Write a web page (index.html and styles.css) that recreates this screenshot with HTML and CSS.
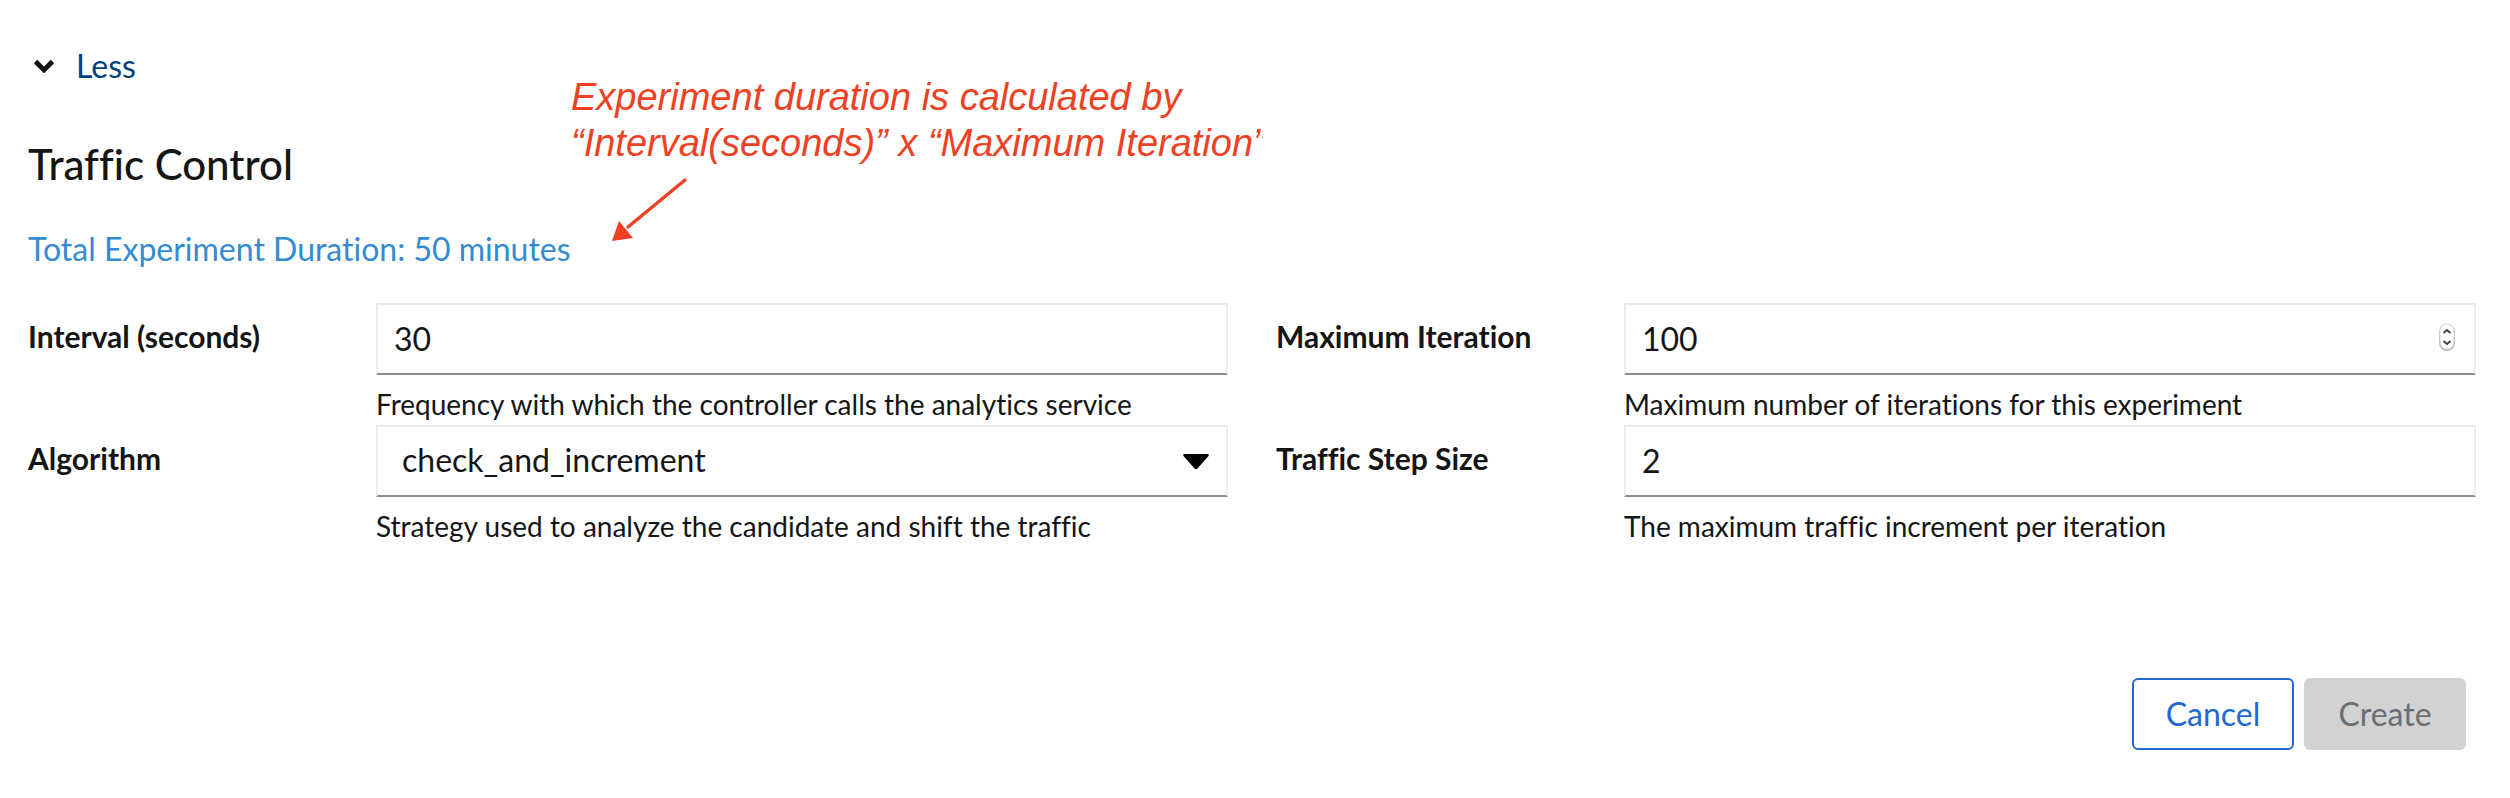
FILE: index.html
```html
<!DOCTYPE html>
<html lang="en">
<head>
<meta charset="utf-8">
<title>Traffic Control</title>
<meta name="viewport" content="width=device-width, initial-scale=1">
<link rel="stylesheet" href="styles.css">
</head>
<body>
<main class="page">
  <button class="toggle" type="button" aria-expanded="true">
    <svg class="toggle-icon" width="22" height="14" viewBox="0 0 22 14" aria-hidden="true"><path d="M2.500 2.500l8.500 8.500 8.500-8.500" fill="none" stroke="#151515" stroke-width="4.800"/></svg>
    <span>Less</span>
  </button>

  <section class="section">
    <h1 class="title">Traffic Control</h1>
    <p class="duration">Total Experiment Duration: 50 minutes</p>
    <aside class="note">
      <p class="note-text">Experiment duration is calculated by<br>“Interval(seconds)” x “Maximum Iteration”</p>
      <svg class="note-arrow" width="80" height="68" viewBox="0 0 80 68" aria-hidden="true"><path d="M75 4L18 51" stroke="#ee4023" stroke-width="3.400" stroke-linecap="round"/><path d="M2 65L9 45 23 62z" fill="#ee4023"/></svg>
    </aside>
  </section>

  <form class="form">
    <div class="fields">
      <div class="field">
        <label class="label" for="interval">Interval (seconds)</label>
        <div class="control">
          <input class="input" id="interval" type="text" value="30" aria-describedby="interval-help">
          <p class="help" id="interval-help">Frequency with which the controller calls the analytics service</p>
        </div>
      </div>
      <div class="field">
        <label class="label" for="iterations">Maximum Iteration</label>
        <div class="control">
          <div class="box">
            <input class="input" id="iterations" type="number" value="100" aria-describedby="iterations-help">
            <svg class="stepper" width="20" height="32" viewBox="0 0 20 32" aria-hidden="true"><rect x="2" y="3" width="16" height="27" rx="8" fill="#bdbdbd"/><rect x="3" y="3" width="14" height="25" rx="7" fill="#fff" stroke="#d6d6d6"/><path d="M6.500 12L10 9l3.500 3M6.500 20l3.500 3 3.500-3" fill="none" stroke="#444" stroke-width="2"/></svg>
          </div>
          <p class="help" id="iterations-help">Maximum number of iterations for this experiment</p>
        </div>
      </div>
      <div class="field">
        <label class="label" for="algorithm">Algorithm</label>
        <div class="control">
          <div class="box">
            <select class="input select" id="algorithm" aria-describedby="algorithm-help"><option>check_and_increment</option></select>
            <svg class="caret" width="26" height="16" viewBox="0 0 26 16" aria-hidden="true"><path d="M1.500 0h23q2 0 1 2L14.500 14.500q-1.500 1.500-3 0L.5 2Q-.5 0 1.500 0z"/></svg>
          </div>
          <p class="help" id="algorithm-help">Strategy used to analyze the candidate and shift the traffic</p>
        </div>
      </div>
      <div class="field">
        <label class="label" for="step">Traffic Step Size</label>
        <div class="control">
          <input class="input" id="step" type="text" value="2" aria-describedby="step-help">
          <p class="help" id="step-help">The maximum traffic increment per iteration</p>
        </div>
      </div>
    </div>
    <div class="actions">
      <button class="button button-secondary" type="button">Cancel</button>
      <button class="button button-primary" type="submit" disabled>Create</button>
    </div>
  </form>
</main>
</body>
</html>
```
FILE: styles.css
```css
* { box-sizing: border-box; }
body {
  margin: 0;
  background: #fff;
  color: #151515;
  font-family: Lato, "Open Sans", sans-serif;
  font-size: 32px;
  line-height: 48px;
  font-variant-ligatures: none;
}
h1, p { margin: 0; }
button, input, select { font: inherit; color: inherit; }

.page { padding: 42px 34px 44px 28px; }

.toggle {
  display: flex;
  align-items: center;
  gap: 21px;
  padding: 0 5px;
  border: 0;
  background: none;
  color: #004080;
}

.section { position: relative; }
.title {
  padding-top: 48px;
  font-size: 42px;
  font-weight: 500;
  line-height: 52px;
}
.duration { padding-top: 35px; color: #338bd1; }

.note {
  position: absolute;
  top: -16px;
  left: 543px;
  color: #ee4023;
}
.note-text {
  width: 692px;
  overflow: hidden;
  white-space: nowrap;
  font: italic 38px/46px "Liberation Sans", Arial, sans-serif;
}
.note-arrow { display: block; margin: 10px 0 0 39px; }

.fields {
  display: grid;
  grid-template-columns: 1fr 1fr;
  column-gap: 48px;
  padding-top: 30px;
}
.field {
  display: grid;
  grid-template-columns: 1fr 3fr;
  column-gap: 64px;
}
.label {
  padding-top: 12px;
  font-size: 30px;
  font-weight: 700;
  line-height: 42px;
  white-space: nowrap;
}
.box { position: relative; }
.input {
  display: block;
  width: 100%;
  height: 72px;
  padding: 0 16px 2px;
  border: 2px solid #ededed;
  border-bottom-color: #8a8d90;
  border-radius: 0;
  background: #fff;
  appearance: none;
}
.input[type="number"] { appearance: textfield; }
.input::-webkit-inner-spin-button { appearance: none; margin: 0; }
.select { padding: 0 64px 2px 24px; }
.stepper { position: absolute; right: 19px; top: 18px; }
.caret { position: absolute; right: 19px; top: 29px; }
.help {
  padding-top: 8px;
  font-size: 28px;
  line-height: 42px;
}

.actions {
  display: flex;
  justify-content: flex-end;
  gap: 10px;
  padding: 131px 10px 0 0;
}
.button {
  min-width: 162px;
  height: 72px;
  padding: 0 30px;
  border: 2px solid transparent;
  border-radius: 6px;
}
.button-secondary { border-color: #2268d1; background: #fff; color: #2268d1; }
.button-primary { background: #d2d2d2; color: #6a6e73; }
```
